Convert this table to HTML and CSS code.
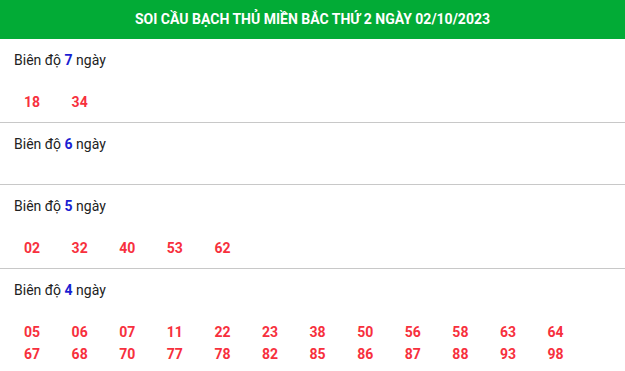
FILE: index.html
```html
<!DOCTYPE html>
<html lang="vi">
<head>
<meta charset="utf-8">
<title>Soi cầu bạch thủ</title>
<link rel="stylesheet" href="styles.css">
</head>
<body>
<div class="box">
  <h2 class="title">SOI CẦU BẠCH THỦ MIỀN BẮC THỨ 2 NGÀY 02/10/2023</h2>
  <div class="section">
    <div class="label">Biên độ <b>7</b> ngày</div>
    <div class="nums"><span>18</span><span>34</span></div>
  </div>
  <div class="section">
    <div class="label">Biên độ <b>6</b> ngày</div>
    <div class="nums"></div>
  </div>
  <div class="section">
    <div class="label">Biên độ <b>5</b> ngày</div>
    <div class="nums"><span>02</span><span>32</span><span>40</span><span>53</span><span>62</span></div>
  </div>
  <div class="section">
    <div class="label">Biên độ <b>4</b> ngày</div>
    <div class="nums">
      <span>05</span><span>06</span><span>07</span><span>11</span><span>22</span><span>23</span><span>38</span><span>50</span><span>56</span><span>58</span><span>63</span><span>64</span>
      <span>67</span><span>68</span><span>70</span><span>77</span><span>78</span><span>82</span><span>85</span><span>86</span><span>87</span><span>88</span><span>93</span><span>98</span>
    </div>
  </div>
</div>
</body>
</html>
```
FILE: styles.css
```css
* { box-sizing: border-box; }
html, body { margin: 0; padding: 0; background: #fff; }
body { font-family: Roboto, "Liberation Sans", Arial, sans-serif; font-size: 14px; color: #222; }
.box { width: 625px; }
.title {
  margin: 0;
  height: 39px;
  line-height: 39px;
  background: #02ab36;
  color: #fff;
  font-size: 14px;
  font-weight: 700;
  text-align: center;
}
.section {
  padding: 11px 0 9px 14px;
  border-bottom: 1px solid #c8c8c8;
}
.label { line-height: 20px; }
.label b { color: #1a1ed2; font-weight: 700; }
.nums {
  margin-top: 21px;
  padding-left: 10px;
  display: grid;
  grid-template-columns: repeat(12, 47.6px);
}
.nums span {
  line-height: 22px;
  color: #f7303d;
  font-weight: 700;
}
```
